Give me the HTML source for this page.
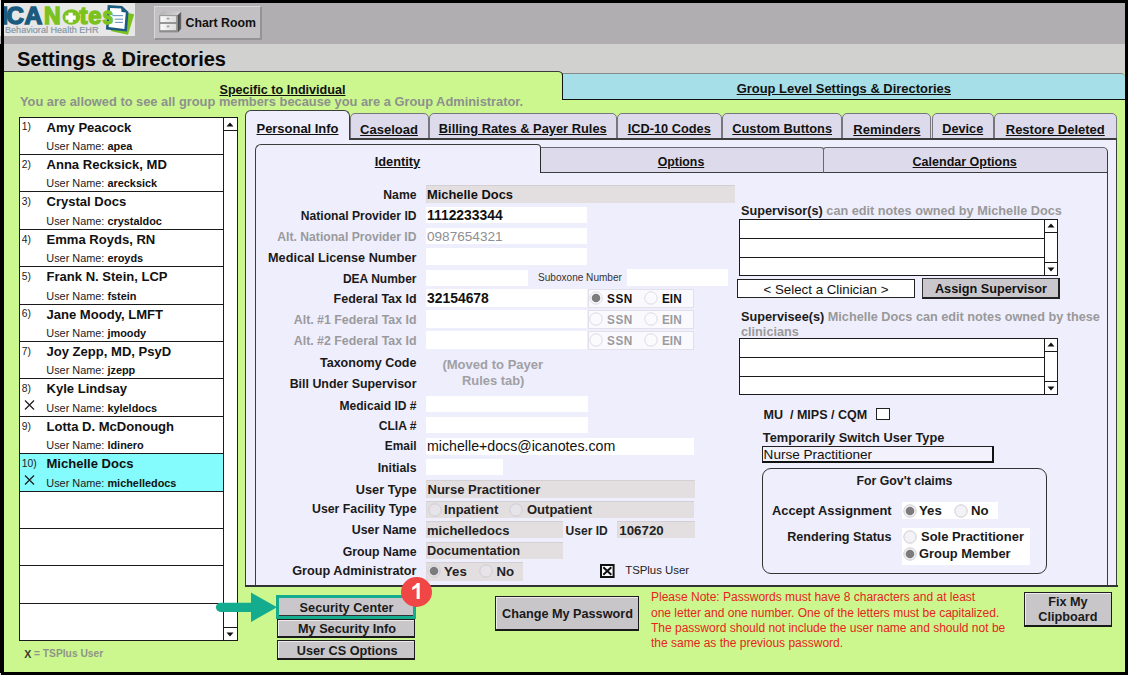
<!DOCTYPE html>
<html><head><meta charset="utf-8"><style>
html,body{margin:0;padding:0;}
body{width:1128px;height:675px;position:relative;overflow:hidden;background:#000;font-family:"Liberation Sans",sans-serif;}
body>div,body>svg{position:absolute;}
.t{white-space:nowrap;}
</style></head><body>
<div style="left:0px;top:0px;width:1px;height:36px;background:#E6E6E6"></div>
<div style="left:0px;top:36px;width:1px;height:8px;background:#B0AEB0"></div>
<div style="left:0px;top:673px;width:1px;height:2px;background:#E0E0E0"></div>
<div style="left:4px;top:3px;width:1121px;height:41px;background:#B0AEB0"></div>
<div style="left:4px;top:3px;width:131px;height:33px;background:#E7E7E7"></div>
<div style="left:4px;top:3px;width:131px;height:33px;overflow:hidden"><svg style="position:absolute;left:-4px;top:-3px" width="140" height="40" viewBox="0 0 140 40">
<polygon points="110.5,31 128,34.8 134.2,14.3 128.3,13" fill="#7CC21F"/>
<polygon points="107.7,4.9 122.1,6 128.5,11.9 126.9,31.6 105.9,29.5" fill="#1B5B7F"/>
<polygon points="110.1,7.9 121.2,8.6 121.5,11.9 125.8,12.4 124.4,28.9 108.6,27" fill="#fff"/>
<line x1="112.4" y1="15.6" x2="123" y2="15.6" stroke="#6f96c0" stroke-width="1.1"/>
<line x1="114.7" y1="19.2" x2="123" y2="19.2" stroke="#6f96c0" stroke-width="1.1"/>
<line x1="115" y1="22.4" x2="123" y2="22.4" stroke="#6f96c0" stroke-width="1.1"/>
<g font-family="Liberation Sans" font-weight="700" font-size="24.6" stroke-width="1.5">
<text x="1.2" y="24.1" fill="#1B5B7F" stroke="#1B5B7F">I</text>
<text x="6.6" y="24.1" fill="#1B5B7F" stroke="#1B5B7F" textLength="17.4" lengthAdjust="spacingAndGlyphs">C</text>
<text x="24.6" y="24.1" fill="#1B5B7F" stroke="#1B5B7F" textLength="17.8" lengthAdjust="spacingAndGlyphs">A</text>
<text x="44" y="24.1" fill="#7CC21F" stroke="#7CC21F" textLength="16.6" lengthAdjust="spacingAndGlyphs">N</text>
<text x="79.6" y="24.1" fill="#7CC21F" stroke="#7CC21F" textLength="8" lengthAdjust="spacingAndGlyphs">t</text>
<text x="88.3" y="24.1" fill="#7CC21F" stroke="#7CC21F" textLength="13.2" lengthAdjust="spacingAndGlyphs">e</text>
<text x="102.4" y="24.1" fill="#7CC21F" stroke="#7CC21F" textLength="10.6" lengthAdjust="spacingAndGlyphs">s</text>
</g>
<ellipse cx="71.4" cy="17.0" rx="8.9" ry="7.7" fill="#7CC21F"/>
<path d="M68.45 12.80 H72.75 V15.45 H75.70 V19.75 H72.75 V22.40 H68.45 V19.75 H65.50 V15.45 H68.45 Z" fill="#fff"/>
</svg></div>
<div class="t" style="left:5px;top:24.5px;font-size:9.1px;line-height:10px;color:#8494A2;letter-spacing:0px;-webkit-text-stroke:0.15px #8494A2">Behavioral Health EHR</div>
<div style="left:154px;top:6px;width:108px;height:34px;background:#C2C0C2;border-top:1px solid #D8D8D8;border-left:1px solid #D8D8D8;border-right:2px solid #959395;border-bottom:2px solid #959395;box-sizing:border-box"></div>
<svg style="left:154px;top:6px" width="36" height="34" viewBox="0 0 36 34">
<defs><linearGradient id="cg1" x1="0" y1="0" x2="1" y2="0"><stop offset="0" stop-color="#B4B4B4"/><stop offset="1" stop-color="#D6D6D6"/></linearGradient>
<linearGradient id="cg2" x1="0" y1="0" x2="1" y2="0"><stop offset="0" stop-color="#3E3E3E"/><stop offset="1" stop-color="#6E6E6E"/></linearGradient>
<linearGradient id="cg3" x1="0" y1="0" x2="1" y2="0"><stop offset="0" stop-color="#FAFAFA"/><stop offset="1" stop-color="#DCDCDC"/></linearGradient></defs>
<polygon points="5.5,9.3 23.7,9.3 27.2,5.8 8.6,5" fill="url(#cg1)"/>
<polygon points="23.7,9.3 27.2,5.8 27.2,22.7 23.7,26.4" fill="url(#cg2)"/>
<rect x="5.3" y="9.3" width="18.4" height="17.1" fill="#8C8C8C"/>
<rect x="6.3" y="10.1" width="15.9" height="6" fill="url(#cg3)"/>
<rect x="6.3" y="17.9" width="15.9" height="6.3" fill="url(#cg3)"/>
<rect x="12.8" y="11.8" width="2.6" height="1.6" fill="#9A9A9A"/>
<rect x="12.8" y="19.6" width="2.6" height="1.6" fill="#9A9A9A"/>
</svg>
<div class="t" style="left:185.5px;top:17.29px;font-size:12.3px;line-height:12.3px;font-weight:700;color:#111;">Chart Room</div>
<div style="left:4px;top:44px;width:1121px;height:29px;background:#D1D1CF"></div>
<div class="t" style="left:17px;top:48.57px;font-size:20px;line-height:20px;font-weight:700;color:#0A0A0A;">Settings &amp; Directories</div>
<div style="left:4px;top:73px;width:1121px;height:599px;background:#CCF78F"></div>
<div style="left:4px;top:71px;width:559px;height:29px;background:#CCF78F;border-top:1.5px solid #3C3C3C;border-right:1.5px solid #3C3C3C;border-top-right-radius:5px;box-sizing:border-box"></div>
<div style="left:561.5px;top:73px;width:563.5px;height:27px;background:#A7DFE8;border-top:1px solid #8a8a8a;border-left:1.5px solid #111;border-bottom:1.5px solid #111;border-top-right-radius:4px;box-sizing:border-box"></div>
<div class="t" style="left:443.79999999999995px;width:800px;text-align:center;top:83.24px;font-size:12.95px;line-height:12.95px;font-weight:700;color:#111;text-decoration:underline">Group Level Settings &amp; Directories</div>
<div class="t" style="left:-117.5px;width:800px;text-align:center;top:84.13px;font-size:12.6px;line-height:12.6px;font-weight:700;color:#111;text-decoration:underline">Specific to Individual</div>
<div class="t" style="left:20px;top:96.12px;font-size:12.85px;line-height:12.85px;font-weight:700;color:#8C918D;">You are allowed to see all group members because you are a Group Administrator.</div>
<div style="left:19px;top:117px;width:219px;height:524px;background:#fff;border:1px solid #1a1a1a;box-sizing:border-box"></div>
<div class="t" style="left:21.8px;top:122.48px;font-size:10.3px;line-height:10.3px;font-weight:400;color:#222;">1)</div>
<div class="t" style="left:46.5px;top:120.65px;font-size:13.05px;line-height:13.05px;font-weight:700;color:#111;">Amy Peacock</div>
<div class="t" style="left:46.3px;top:140.97px;font-size:10.9px;line-height:10.9px;color:#222">User Name: <b style="color:#111">apea</b></div>
<div style="left:19px;top:154px;width:205px;height:1px;background:#1a1a1a"></div>
<div class="t" style="left:21.8px;top:159.88px;font-size:10.3px;line-height:10.3px;font-weight:400;color:#222;">2)</div>
<div class="t" style="left:46.5px;top:158.05px;font-size:13.05px;line-height:13.05px;font-weight:700;color:#111;">Anna Recksick, MD</div>
<div class="t" style="left:46.3px;top:178.37px;font-size:10.9px;line-height:10.9px;color:#222">User Name: <b style="color:#111">arecksick</b></div>
<div style="left:19px;top:191px;width:205px;height:1px;background:#1a1a1a"></div>
<div class="t" style="left:21.8px;top:197.28px;font-size:10.3px;line-height:10.3px;font-weight:400;color:#222;">3)</div>
<div class="t" style="left:46.5px;top:195.45px;font-size:13.05px;line-height:13.05px;font-weight:700;color:#111;">Crystal Docs</div>
<div class="t" style="left:46.3px;top:215.77px;font-size:10.9px;line-height:10.9px;color:#222">User Name: <b style="color:#111">crystaldoc</b></div>
<div style="left:19px;top:229px;width:205px;height:1px;background:#1a1a1a"></div>
<div class="t" style="left:21.8px;top:234.68px;font-size:10.3px;line-height:10.3px;font-weight:400;color:#222;">4)</div>
<div class="t" style="left:46.5px;top:232.85px;font-size:13.05px;line-height:13.05px;font-weight:700;color:#111;">Emma Royds, RN</div>
<div class="t" style="left:46.3px;top:253.17px;font-size:10.9px;line-height:10.9px;color:#222">User Name: <b style="color:#111">eroyds</b></div>
<div style="left:19px;top:266px;width:205px;height:1px;background:#1a1a1a"></div>
<div class="t" style="left:21.8px;top:272.08px;font-size:10.3px;line-height:10.3px;font-weight:400;color:#222;">5)</div>
<div class="t" style="left:46.5px;top:270.25px;font-size:13.05px;line-height:13.05px;font-weight:700;color:#111;">Frank N. Stein, LCP</div>
<div class="t" style="left:46.3px;top:290.57px;font-size:10.9px;line-height:10.9px;color:#222">User Name: <b style="color:#111">fstein</b></div>
<div style="left:19px;top:304px;width:205px;height:1px;background:#1a1a1a"></div>
<div class="t" style="left:21.8px;top:309.48px;font-size:10.3px;line-height:10.3px;font-weight:400;color:#222;">6)</div>
<div class="t" style="left:46.5px;top:307.65px;font-size:13.05px;line-height:13.05px;font-weight:700;color:#111;">Jane Moody, LMFT</div>
<div class="t" style="left:46.3px;top:327.97px;font-size:10.9px;line-height:10.9px;color:#222">User Name: <b style="color:#111">jmoody</b></div>
<div style="left:19px;top:341px;width:205px;height:1px;background:#1a1a1a"></div>
<div class="t" style="left:21.8px;top:346.88px;font-size:10.3px;line-height:10.3px;font-weight:400;color:#222;">7)</div>
<div class="t" style="left:46.5px;top:345.05px;font-size:13.05px;line-height:13.05px;font-weight:700;color:#111;">Joy Zepp, MD, PsyD</div>
<div class="t" style="left:46.3px;top:365.37px;font-size:10.9px;line-height:10.9px;color:#222">User Name: <b style="color:#111">jzepp</b></div>
<div style="left:19px;top:378px;width:205px;height:1px;background:#1a1a1a"></div>
<div class="t" style="left:21.8px;top:384.28px;font-size:10.3px;line-height:10.3px;font-weight:400;color:#222;">8)</div>
<div class="t" style="left:46.5px;top:382.45px;font-size:13.05px;line-height:13.05px;font-weight:700;color:#111;">Kyle Lindsay</div>
<div class="t" style="left:46.3px;top:402.77px;font-size:10.9px;line-height:10.9px;color:#222">User Name: <b style="color:#111">kyleldocs</b></div>
<svg style="left:24px;top:399.90px" width="11" height="10" viewBox="0 0 11 10"><path d="M1 0.5 L10 9.5 M10 0.5 L1 9.5" stroke="#222" stroke-width="1.3"/></svg>
<div style="left:19px;top:416px;width:205px;height:1px;background:#1a1a1a"></div>
<div class="t" style="left:21.8px;top:421.68px;font-size:10.3px;line-height:10.3px;font-weight:400;color:#222;">9)</div>
<div class="t" style="left:46.5px;top:419.85px;font-size:13.05px;line-height:13.05px;font-weight:700;color:#111;">Lotta D. McDonough</div>
<div class="t" style="left:46.3px;top:440.17px;font-size:10.9px;line-height:10.9px;color:#222">User Name: <b style="color:#111">ldinero</b></div>
<div style="left:20px;top:454px;width:203px;height:37px;background:#84FBFC"></div>
<div style="left:19px;top:453px;width:205px;height:1px;background:#1a1a1a"></div>
<div class="t" style="left:21.8px;top:459.08px;font-size:10.3px;line-height:10.3px;font-weight:400;color:#222;">10)</div>
<div class="t" style="left:46.5px;top:457.25px;font-size:13.05px;line-height:13.05px;font-weight:700;color:#111;">Michelle Docs</div>
<div class="t" style="left:46.3px;top:477.57px;font-size:10.9px;line-height:10.9px;color:#222">User Name: <b style="color:#111">michelledocs</b></div>
<svg style="left:24px;top:474.70px" width="11" height="10" viewBox="0 0 11 10"><path d="M1 0.5 L10 9.5 M10 0.5 L1 9.5" stroke="#222" stroke-width="1.3"/></svg>
<div style="left:19px;top:491px;width:205px;height:1px;background:#1a1a1a"></div>
<div style="left:19px;top:528px;width:205px;height:1px;background:#1a1a1a"></div>
<div style="left:19px;top:565px;width:205px;height:1px;background:#1a1a1a"></div>
<div style="left:19px;top:603px;width:205px;height:1px;background:#1a1a1a"></div>
<div style="left:223px;top:117px;width:15px;height:524px;background:#fff;border:1px solid #1a1a1a;box-sizing:border-box"></div>
<div style="left:223px;top:130px;width:15px;height:1px;background:#1a1a1a"></div>
<div style="left:223px;top:627px;width:15px;height:1px;background:#1a1a1a"></div>
<svg style="left:226px;top:121.5px" width="8" height="5" viewBox="0 0 8 5"><polygon points="0.5,4.5 7.5,4.5 4,0.5" fill="#111"/></svg>
<svg style="left:226px;top:631.5px" width="8" height="5" viewBox="0 0 8 5"><polygon points="0.5,0.5 7.5,0.5 4,4.5" fill="#111"/></svg>
<div class="t" style="left:24.3px;top:648.73px;font-size:10.6px;line-height:10.6px;font-weight:700;color:#34402C;">X</div>
<div class="t" style="left:34px;top:649.02px;font-size:10.25px;line-height:10.25px;font-weight:700;color:#8E9588;">= TSPlus User</div>
<div style="left:245px;top:138px;width:872px;height:449px;background:#EFEEFC;border:1.5px solid #3C3C3C;border-top:none;box-sizing:border-box"></div>
<div style="left:245px;top:110px;width:104.5px;height:30px;background:#EFEEFC;border:1.5px solid #3C3C3C;border-bottom:none;border-radius:6px 6px 0 0;box-sizing:border-box"></div>
<div class="t" style="left:-102.5px;width:800px;text-align:center;top:122.64px;font-size:12.95px;line-height:12.95px;font-weight:700;color:#111;text-decoration:underline">Personal Info</div>
<div style="left:349.5px;top:112.8px;width:79.0px;height:26.5px;background:#DDDBEB;border:1px solid #77757D;border-radius:5px 5px 0 0;box-sizing:border-box"></div>
<div class="t" style="left:-11.0px;width:800px;text-align:center;top:122.60px;font-size:13px;line-height:13px;font-weight:700;color:#111;text-decoration:underline">Caseload</div>
<div style="left:428.5px;top:112.8px;width:188.5px;height:26.5px;background:#DDDBEB;border:1px solid #77757D;border-radius:5px 5px 0 0;box-sizing:border-box"></div>
<div class="t" style="left:122.75px;width:800px;text-align:center;top:122.71px;font-size:12.86px;line-height:12.86px;font-weight:700;color:#111;text-decoration:underline">Billing Rates &amp; Payer Rules</div>
<div style="left:617px;top:112.8px;width:104.5px;height:26.5px;background:#DDDBEB;border:1px solid #77757D;border-radius:5px 5px 0 0;box-sizing:border-box"></div>
<div class="t" style="left:269.25px;width:800px;text-align:center;top:122.79px;font-size:12.77px;line-height:12.77px;font-weight:700;color:#111;text-decoration:underline">ICD-10 Codes</div>
<div style="left:722px;top:112.8px;width:120.29999999999995px;height:26.5px;background:#DDDBEB;border:1px solid #77757D;border-radius:5px 5px 0 0;box-sizing:border-box"></div>
<div class="t" style="left:382.15px;width:800px;text-align:center;top:122.74px;font-size:12.83px;line-height:12.83px;font-weight:700;color:#111;text-decoration:underline">Custom Buttons</div>
<div style="left:842.3px;top:112.8px;width:89.20000000000005px;height:26.5px;background:#DDDBEB;border:1px solid #77757D;border-radius:5px 5px 0 0;box-sizing:border-box"></div>
<div class="t" style="left:486.9px;width:800px;text-align:center;top:122.60px;font-size:13px;line-height:13px;font-weight:700;color:#111;text-decoration:underline">Reminders</div>
<div style="left:931.5px;top:112.8px;width:62.5px;height:26.5px;background:#DDDBEB;border:1px solid #77757D;border-radius:5px 5px 0 0;box-sizing:border-box"></div>
<div class="t" style="left:562.75px;width:800px;text-align:center;top:122.85px;font-size:12.7px;line-height:12.7px;font-weight:700;color:#111;text-decoration:underline">Device</div>
<div style="left:994px;top:112.8px;width:122.5px;height:26.5px;background:#DDDBEB;border:1px solid #77757D;border-radius:5px 5px 0 0;box-sizing:border-box"></div>
<div class="t" style="left:655.25px;width:800px;text-align:center;top:122.60px;font-size:13px;line-height:13px;font-weight:700;color:#111;text-decoration:underline">Restore Deleted</div>
<div style="left:349px;top:138px;width:768px;height:1.5px;background:#3C3C3C"></div>
<div style="left:255px;top:160px;width:853px;height:426px;background:#EFEEFC;border-left:1.5px solid #3C3C3C;border-right:1.5px solid #3C3C3C;box-sizing:border-box"></div>
<div style="left:255px;top:144px;width:286px;height:28.5px;background:#EFEEFC;border-top:1.5px solid #3C3C3C;border-left:1.5px solid #3C3C3C;border-right:1.5px solid #2a2a2a;border-radius:6px 4px 0 0;box-sizing:border-box"></div>
<div style="left:540.5px;top:146.6px;width:283.5px;height:26px;background:#DDDBEB;border-top:1px solid #6A6870;border-right:1px solid #6A6870;border-bottom:1.5px solid #3C3C3C;border-radius:0 3px 0 0;box-sizing:border-box"></div>
<div style="left:823px;top:146.6px;width:285px;height:26px;background:#DDDBEB;border-top:1px solid #6A6870;border-left:1px solid #6A6870;border-right:1.5px solid #3C3C3C;border-bottom:1.5px solid #3C3C3C;border-radius:3px 5px 0 0;box-sizing:border-box"></div>
<div style="left:245px;top:585.4px;width:872.5px;height:1.3px;background:#333"></div>
<div class="t" style="left:-2.5px;width:800px;text-align:center;top:155.96px;font-size:12.8px;line-height:12.8px;font-weight:700;color:#111;text-decoration:underline">Identity</div>
<div class="t" style="left:281px;width:800px;text-align:center;top:156.39px;font-size:12.3px;line-height:12.3px;font-weight:700;color:#111;text-decoration:underline">Options</div>
<div class="t" style="left:564.7px;width:800px;text-align:center;top:156.22px;font-size:12.5px;line-height:12.5px;font-weight:700;color:#111;text-decoration:underline">Calendar Options</div>
<div style="left:425.6px;top:185.3px;width:309.0px;height:17.5px;background:#E3DFE1;border-top:1px solid #D3CFD3;border-left:1px solid #DCD8DC;box-sizing:border-box"></div>
<div style="left:425.6px;top:206.7px;width:161.79999999999995px;height:16.5px;background:#fff;"></div>
<div style="left:425.6px;top:227.6px;width:161.79999999999995px;height:16.400000000000006px;background:#fff;"></div>
<div style="left:425.6px;top:248.4px;width:161.79999999999995px;height:16.599999999999994px;background:#fff;"></div>
<div style="left:425.6px;top:269.8px;width:102.60000000000002px;height:16.5px;background:#fff;"></div>
<div style="left:626.9px;top:268.8px;width:101.39999999999998px;height:17.19999999999999px;background:#fff;"></div>
<div style="left:425.6px;top:289.3px;width:161.79999999999995px;height:17.69999999999999px;background:#fff;"></div>
<div style="left:425.6px;top:310.3px;width:161.79999999999995px;height:17.69999999999999px;background:#fff;"></div>
<div style="left:425.6px;top:331.3px;width:161.79999999999995px;height:17.69999999999999px;background:#fff;"></div>
<div style="left:587.5px;top:289.0px;width:106.70000000000005px;height:19.19999999999999px;background:#FAFAFE;border:1px solid #E2E0EA;box-sizing:border-box"></div>
<div style="left:587.5px;top:309.8px;width:106.70000000000005px;height:19.19999999999999px;background:#FAFAFE;border:1px solid #E2E0EA;box-sizing:border-box"></div>
<div style="left:587.5px;top:330.6px;width:106.70000000000005px;height:19.19999999999999px;background:#FAFAFE;border:1px solid #E2E0EA;box-sizing:border-box"></div>
<div style="left:425.6px;top:395.9px;width:162.0px;height:16.100000000000023px;background:#fff;"></div>
<div style="left:425.6px;top:416.5px;width:162.0px;height:16.5px;background:#fff;"></div>
<div style="left:425.6px;top:438.0px;width:268.4px;height:16.600000000000023px;background:#fff;"></div>
<div style="left:425.6px;top:458.6px;width:77.39999999999998px;height:16.69999999999999px;background:#fff;"></div>
<div style="left:425.5px;top:480.0px;width:269.5px;height:17.5px;background:#E3DFE1;border-top:1px solid #D3CFD3;border-left:1px solid #DCD8DC;box-sizing:border-box"></div>
<div style="left:425.5px;top:500.6px;width:268.1px;height:17.600000000000023px;background:#E3DFE1;border-top:1px solid #D3CFD3;border-left:1px solid #DCD8DC;box-sizing:border-box"></div>
<div style="left:425.5px;top:520.5px;width:137.10000000000002px;height:17.5px;background:#E3DFE1;border-top:1px solid #D3CFD3;border-left:1px solid #DCD8DC;box-sizing:border-box"></div>
<div style="left:617.0px;top:520.5px;width:78.0px;height:17.5px;background:#E3DFE1;border-top:1px solid #D3CFD3;border-left:1px solid #DCD8DC;box-sizing:border-box"></div>
<div style="left:425.5px;top:541.5px;width:137.10000000000002px;height:17.899999999999977px;background:#E3DFE1;border-top:1px solid #D3CFD3;border-left:1px solid #DCD8DC;box-sizing:border-box"></div>
<div style="left:425.5px;top:562.2px;width:97.89999999999998px;height:18.399999999999977px;background:#E3DFE1;border-top:1px solid #D3CFD3;border-left:1px solid #DCD8DC;box-sizing:border-box"></div>
<div class="t" style="left:-183.5px;width:600px;text-align:right;top:188.88px;font-size:12.19px;line-height:12.19px;font-weight:700;color:#1a1a1a;">Name</div>
<div class="t" style="left:-183.5px;width:600px;text-align:right;top:210.05px;font-size:12.11px;line-height:12.11px;font-weight:700;color:#1a1a1a;">National Provider ID</div>
<div class="t" style="left:-183.5px;width:600px;text-align:right;top:231.11px;font-size:12.16px;line-height:12.16px;font-weight:700;color:#9A9A9E;">Alt. National Provider ID</div>
<div class="t" style="left:-183.5px;width:600px;text-align:right;top:251.68px;font-size:12.66px;line-height:12.66px;font-weight:700;color:#1a1a1a;">Medical License Number</div>
<div class="t" style="left:-183.5px;width:600px;text-align:right;top:273.24px;font-size:12.0px;line-height:12.0px;font-weight:700;color:#1a1a1a;">DEA Number</div>
<div class="t" style="left:-183.5px;width:600px;text-align:right;top:293.44px;font-size:12.48px;line-height:12.48px;font-weight:700;color:#1a1a1a;">Federal Tax Id</div>
<div class="t" style="left:-183.5px;width:600px;text-align:right;top:314.33px;font-size:12.37px;line-height:12.37px;font-weight:700;color:#9A9A9E;">Alt. #1 Federal Tax Id</div>
<div class="t" style="left:-183.5px;width:600px;text-align:right;top:334.53px;font-size:12.37px;line-height:12.37px;font-weight:700;color:#9A9A9E;">Alt. #2 Federal Tax Id</div>
<div class="t" style="left:-183.5px;width:600px;text-align:right;top:356.68px;font-size:12.54px;line-height:12.54px;font-weight:700;color:#1a1a1a;">Taxonomy Code</div>
<div class="t" style="left:-183.5px;width:600px;text-align:right;top:377.89px;font-size:12.42px;line-height:12.42px;font-weight:700;color:#1a1a1a;">Bill Under Supervisor</div>
<div class="t" style="left:-183.5px;width:600px;text-align:right;top:399.50px;font-size:12.05px;line-height:12.05px;font-weight:700;color:#1a1a1a;">Medicaid ID #</div>
<div class="t" style="left:-183.5px;width:600px;text-align:right;top:420.17px;font-size:12.08px;line-height:12.08px;font-weight:700;color:#1a1a1a;">CLIA #</div>
<div class="t" style="left:-183.5px;width:600px;text-align:right;top:441.03px;font-size:11.9px;line-height:11.9px;font-weight:700;color:#1a1a1a;">Email</div>
<div class="t" style="left:-183.5px;width:600px;text-align:right;top:461.53px;font-size:12.25px;line-height:12.25px;font-weight:700;color:#1a1a1a;">Initials</div>
<div class="t" style="left:-183.5px;width:600px;text-align:right;top:483.61px;font-size:12.75px;line-height:12.75px;font-weight:700;color:#1a1a1a;">User Type</div>
<div class="t" style="left:-183.5px;width:600px;text-align:right;top:502.97px;font-size:12.32px;line-height:12.32px;font-weight:700;color:#1a1a1a;">User Facility Type</div>
<div class="t" style="left:-183.5px;width:600px;text-align:right;top:524.39px;font-size:12.42px;line-height:12.42px;font-weight:700;color:#1a1a1a;">User Name</div>
<div class="t" style="left:-183.5px;width:600px;text-align:right;top:545.98px;font-size:12.31px;line-height:12.31px;font-weight:700;color:#1a1a1a;">Group Name</div>
<div class="t" style="left:-183.5px;width:600px;text-align:right;top:565.45px;font-size:12.7px;line-height:12.7px;font-weight:700;color:#1a1a1a;">Group Administrator</div>
<div class="t" style="left:427px;top:188.88px;font-size:12.9px;line-height:12.9px;font-weight:700;color:#111;">Michelle Docs</div>
<div class="t" style="left:427px;top:208.53px;font-size:13.9px;line-height:13.9px;font-weight:700;color:#111;">1112233344</div>
<div class="t" style="left:427px;top:229.89px;font-size:13.6px;line-height:13.6px;font-weight:400;color:#8E8E92;">0987654321</div>
<div class="t" style="left:538px;top:272.98px;font-size:10.07px;line-height:10.07px;font-weight:400;color:#333;">Suboxone Number</div>
<div class="t" style="left:427px;top:292.23px;font-size:13.9px;line-height:13.9px;font-weight:700;color:#111;">32154678</div>
<div class="t" style="left:92.80000000000001px;width:800px;text-align:center;top:357.95px;font-size:13.05px;line-height:13.05px;font-weight:700;color:#A0A0A4;">(Moved to Payer</div>
<div class="t" style="left:93.19999999999999px;width:800px;text-align:center;top:375.45px;font-size:12.93px;line-height:12.93px;font-weight:700;color:#A0A0A4;">Rules tab)</div>
<div class="t" style="left:427px;top:438.78px;font-size:14.2px;line-height:14.2px;font-weight:400;color:#111;">michelle+docs@icanotes.com</div>
<div class="t" style="left:427.5px;top:483.17px;font-size:13.03px;line-height:13.03px;font-weight:700;color:#222;">Nurse Practitioner</div>
<div class="t" style="left:444.1px;top:502.97px;font-size:13.03px;line-height:13.03px;font-weight:700;color:#222;">Inpatient</div>
<div class="t" style="left:527px;top:502.97px;font-size:13.03px;line-height:13.03px;font-weight:700;color:#222;">Outpatient</div>
<div class="t" style="left:427px;top:523.99px;font-size:13.01px;line-height:13.01px;font-weight:700;color:#222;">michelledocs</div>
<div class="t" style="left:565.6px;top:524.60px;font-size:12.05px;line-height:12.05px;font-weight:700;color:#222;">User ID</div>
<div class="t" style="left:619.3px;top:523.74px;font-size:13.3px;line-height:13.3px;font-weight:700;color:#222;">106720</div>
<div class="t" style="left:427px;top:544.56px;font-size:12.8px;line-height:12.8px;font-weight:700;color:#222;">Documentation</div>
<div class="t" style="left:444px;top:565.13px;font-size:13.2px;line-height:13.2px;font-weight:700;color:#222;">Yes</div>
<div class="t" style="left:496.6px;top:565.13px;font-size:13.2px;line-height:13.2px;font-weight:700;color:#222;">No</div>
<div class="t" style="left:625.2px;top:565.25px;font-size:11.4px;line-height:11.4px;font-weight:400;color:#222;">TSPlus User</div>
<svg style="left:588.2px;top:290.2px" width="16" height="16" viewBox="0 0 16 16"><circle cx="8" cy="8" r="6.2" fill="#FBFBFD" stroke="#DDDBE3" stroke-width="1"/><circle cx="8" cy="8" r="4.3" fill="#7c7c7c"/></svg>
<svg style="left:643.3px;top:290.2px" width="16" height="16" viewBox="0 0 16 16"><circle cx="8" cy="8" r="6.2" fill="#FBFBFD" stroke="#DDDBE3" stroke-width="1"/></svg>
<div class="t" style="left:607.2px;top:292.16px;font-size:13.4px;line-height:13.4px;font-weight:700;color:#111;transform:scaleX(0.88);transform-origin:0 0;letter-spacing:0.6px">SSN</div>
<div class="t" style="left:661.7px;top:292.16px;font-size:13.4px;line-height:13.4px;font-weight:700;color:#111;transform:scaleX(0.88);transform-origin:0 0">EIN</div>
<svg style="left:588.2px;top:311.0px" width="16" height="16" viewBox="0 0 16 16"><circle cx="8" cy="8" r="6.2" fill="#FBFBFD" stroke="#DDDBE3" stroke-width="1"/></svg>
<svg style="left:643.3px;top:311.0px" width="16" height="16" viewBox="0 0 16 16"><circle cx="8" cy="8" r="6.2" fill="#FBFBFD" stroke="#DDDBE3" stroke-width="1"/></svg>
<div class="t" style="left:607.2px;top:312.96px;font-size:13.4px;line-height:13.4px;font-weight:700;color:#9A9A9E;transform:scaleX(0.88);transform-origin:0 0;letter-spacing:0.6px">SSN</div>
<div class="t" style="left:661.7px;top:312.96px;font-size:13.4px;line-height:13.4px;font-weight:700;color:#9A9A9E;transform:scaleX(0.88);transform-origin:0 0">EIN</div>
<svg style="left:588.2px;top:331.8px" width="16" height="16" viewBox="0 0 16 16"><circle cx="8" cy="8" r="6.2" fill="#FBFBFD" stroke="#DDDBE3" stroke-width="1"/></svg>
<svg style="left:643.3px;top:331.8px" width="16" height="16" viewBox="0 0 16 16"><circle cx="8" cy="8" r="6.2" fill="#FBFBFD" stroke="#DDDBE3" stroke-width="1"/></svg>
<div class="t" style="left:607.2px;top:333.76px;font-size:13.4px;line-height:13.4px;font-weight:700;color:#9A9A9E;transform:scaleX(0.88);transform-origin:0 0;letter-spacing:0.6px">SSN</div>
<div class="t" style="left:661.7px;top:333.76px;font-size:13.4px;line-height:13.4px;font-weight:700;color:#9A9A9E;transform:scaleX(0.88);transform-origin:0 0">EIN</div>
<svg style="left:426.6px;top:501.5px" width="16" height="16" viewBox="0 0 16 16"><circle cx="8" cy="8" r="6.2" fill="#E6E4E8" stroke="#CFCDD3" stroke-width="1"/></svg>
<svg style="left:508.20000000000005px;top:501.5px" width="16" height="16" viewBox="0 0 16 16"><circle cx="8" cy="8" r="6.2" fill="#E6E4E8" stroke="#CFCDD3" stroke-width="1"/></svg>
<svg style="left:426.4px;top:563.3px" width="16" height="16" viewBox="0 0 16 16"><circle cx="8" cy="8" r="6.2" fill="#E6E4E8" stroke="#CFCDD3" stroke-width="1"/><circle cx="8" cy="8" r="4.3" fill="#7c7c7c"/></svg>
<svg style="left:477.9px;top:563.3px" width="16" height="16" viewBox="0 0 16 16"><circle cx="8" cy="8" r="6.2" fill="#E6E4E8" stroke="#CFCDD3" stroke-width="1"/></svg>
<svg style="left:600px;top:564px" width="15" height="14" viewBox="0 0 15 14"><rect x="1" y="1" width="12.6" height="12" fill="#fff" stroke="#111" stroke-width="2"/><path d="M3.3 3.2 L11.3 10.8 M11.3 3.2 L3.3 10.8" stroke="#111" stroke-width="2"/></svg>
<div class="t" style="left:741px;top:205.25px;font-size:12.7px;line-height:12.7px;font-weight:700;color:#999"><span style="color:#1a1a1a">Supervisor(s)</span> can edit notes owned by Michelle Docs</div>
<div style="left:739px;top:219px;width:319px;height:57px;background:#fff;border:1px solid #1a1a1a;box-sizing:border-box"></div>
<div style="left:739px;top:238px;width:305px;height:1px;background:#1a1a1a"></div>
<div style="left:739px;top:257px;width:305px;height:1px;background:#1a1a1a"></div>
<div style="left:1044px;top:219px;width:1px;height:57px;background:#1a1a1a"></div>
<div style="left:1044px;top:232px;width:14px;height:1px;background:#1a1a1a"></div>
<div style="left:1044px;top:262px;width:14px;height:1px;background:#1a1a1a"></div>
<svg style="left:1047px;top:223px" width="8" height="5" viewBox="0 0 8 5"><polygon points="0.5,4.5 7.5,4.5 4,0.5" fill="#111"/></svg>
<svg style="left:1047px;top:267px" width="8" height="5" viewBox="0 0 8 5"><polygon points="0.5,0.5 7.5,0.5 4,4.5" fill="#111"/></svg>
<div style="left:737px;top:279.2px;width:178px;height:18.7px;background:#fff;border:1.3px solid #222;box-sizing:border-box"></div>
<div class="t" style="left:426px;width:800px;text-align:center;top:282.54px;font-size:13.3px;line-height:13.3px;font-weight:400;color:#111;">&lt; Select a Clinician &gt;</div>
<div style="left:922px;top:278.2px;width:138.2px;height:20.8px;background:#C9C7CB;border:1.3px solid #333;border-right:2px solid #222;border-bottom:2px solid #222;box-sizing:border-box"></div>
<div class="t" style="left:591px;width:800px;text-align:center;top:282.75px;font-size:12.7px;line-height:12.7px;font-weight:700;color:#111;">Assign Supervisor</div>
<div class="t" style="white-space:normal;left:741px;top:309.95px;width:366px;font-size:12.7px;line-height:14.9px;font-weight:700;color:#999"><span style="color:#1a1a1a">Supervisee(s)</span> Michelle Docs can edit notes owned by these clinicians</div>
<div style="left:739px;top:338px;width:319px;height:57px;background:#fff;border:1px solid #1a1a1a;box-sizing:border-box"></div>
<div style="left:739px;top:357px;width:305px;height:1px;background:#1a1a1a"></div>
<div style="left:739px;top:376px;width:305px;height:1px;background:#1a1a1a"></div>
<div style="left:1044px;top:338px;width:1px;height:57px;background:#1a1a1a"></div>
<div style="left:1044px;top:351px;width:14px;height:1px;background:#1a1a1a"></div>
<div style="left:1044px;top:381px;width:14px;height:1px;background:#1a1a1a"></div>
<svg style="left:1047px;top:342px" width="8" height="5" viewBox="0 0 8 5"><polygon points="0.5,4.5 7.5,4.5 4,0.5" fill="#111"/></svg>
<svg style="left:1047px;top:386px" width="8" height="5" viewBox="0 0 8 5"><polygon points="0.5,0.5 7.5,0.5 4,4.5" fill="#111"/></svg>
<div class="t" style="left:763.5px;top:408.68px;font-size:12.54px;line-height:12.54px;font-weight:700;color:#1a1a1a;white-space:pre">MU  / MIPS / CQM</div>
<div style="left:876.3px;top:407.9px;width:13.4px;height:12.4px;background:#fff;border:1.3px solid #222;box-sizing:border-box"></div>
<div class="t" style="left:762.8px;top:431.96px;font-size:12.8px;line-height:12.8px;font-weight:700;color:#1a1a1a;">Temporarily Switch User Type</div>
<div style="left:762px;top:446.3px;width:231.5px;height:16.9px;background:#F2F1FC;border:1.3px solid #222;border-right:2.6px solid #111;border-bottom:2.8px solid #111;box-sizing:border-box"></div>
<div class="t" style="left:763.6px;top:448.13px;font-size:13.55px;line-height:13.55px;font-weight:400;color:#111;">Nurse Practitioner</div>
<div style="left:761.9px;top:467.8px;width:284.7px;height:105.8px;border:1.3px solid #333;border-radius:9px;box-sizing:border-box"></div>
<div class="t" style="left:504.5px;width:800px;text-align:center;top:475.19px;font-size:12.3px;line-height:12.3px;font-weight:700;color:#1a1a1a;">For Gov't claims</div>
<div class="t" style="left:291.6px;width:600px;text-align:right;top:504.71px;font-size:12.86px;line-height:12.86px;font-weight:700;color:#1a1a1a;">Accept Assignment</div>
<div class="t" style="left:291.6px;width:600px;text-align:right;top:531.23px;font-size:12.61px;line-height:12.61px;font-weight:700;color:#1a1a1a;">Rendering Status</div>
<div style="left:901.7px;top:502.2px;width:96.09999999999991px;height:16.80000000000001px;background:#fff;"></div>
<div style="left:901.7px;top:528.4px;width:128.70000000000005px;height:37.10000000000002px;background:#fff;"></div>
<svg style="left:901.5px;top:502.5px" width="16" height="16" viewBox="0 0 16 16"><circle cx="8" cy="8" r="6.2" fill="#F3F2F6" stroke="#CFCDD3" stroke-width="1"/><circle cx="8" cy="8" r="4.3" fill="#7c7c7c"/></svg>
<svg style="left:952.5px;top:502.5px" width="16" height="16" viewBox="0 0 16 16"><circle cx="8" cy="8" r="6.2" fill="#F3F2F6" stroke="#CFCDD3" stroke-width="1"/></svg>
<div class="t" style="left:919px;top:504.33px;font-size:13.2px;line-height:13.2px;font-weight:700;color:#1a1a1a;">Yes</div>
<div class="t" style="left:971px;top:504.33px;font-size:13.2px;line-height:13.2px;font-weight:700;color:#1a1a1a;">No</div>
<svg style="left:901.5px;top:529px" width="16" height="16" viewBox="0 0 16 16"><circle cx="8" cy="8" r="6.2" fill="#F3F2F6" stroke="#CFCDD3" stroke-width="1"/></svg>
<svg style="left:901.5px;top:546px" width="16" height="16" viewBox="0 0 16 16"><circle cx="8" cy="8" r="6.2" fill="#F3F2F6" stroke="#CFCDD3" stroke-width="1"/><circle cx="8" cy="8" r="4.3" fill="#7c7c7c"/></svg>
<div class="t" style="left:921px;top:531.03px;font-size:12.96px;line-height:12.96px;font-weight:700;color:#1a1a1a;">Sole Practitioner</div>
<div class="t" style="left:919px;top:548.10px;font-size:12.88px;line-height:12.88px;font-weight:700;color:#1a1a1a;">Group Member</div>
<div style="left:276px;top:595.3px;width:140px;height:23.5px;background:#13AC8F"></div>
<div style="left:279px;top:598px;width:134px;height:17.5px;background:#C9C7CB;border-bottom:1.5px solid #333;box-sizing:border-box"></div>
<div class="t" style="left:-53.5px;width:800px;text-align:center;top:601.75px;font-size:12.7px;line-height:12.7px;font-weight:700;color:#1a1a1a;">Security Center</div>
<div style="left:277.2px;top:619.3px;width:138.3px;height:19.1px;background:#C8C6C9;border:1.4px solid #1e1e1e;border-right:1.8px solid #1a1a1a;border-bottom:2px solid #1a1a1a;box-sizing:border-box;box-shadow:inset 1px 1px 0 #EDEBEE"></div>
<div class="t" style="left:-53px;width:800px;text-align:center;top:623.25px;font-size:12.7px;line-height:12.7px;font-weight:700;color:#1a1a1a;">My Security Info</div>
<div style="left:277.2px;top:640.2px;width:138.3px;height:20.3px;background:#C8C6C9;border:1.4px solid #1e1e1e;border-right:1.8px solid #1a1a1a;border-bottom:2px solid #1a1a1a;box-sizing:border-box;box-shadow:inset 1px 1px 0 #EDEBEE"></div>
<div class="t" style="left:-52.80000000000001px;width:800px;text-align:center;top:645.05px;font-size:12.7px;line-height:12.7px;font-weight:700;color:#1a1a1a;">User CS Options</div>
<svg style="left:210px;top:588px" width="75" height="40" viewBox="210 588 75 40"><line x1="220.5" y1="607.3" x2="255" y2="607.3" stroke="#13AC8F" stroke-width="9.2" stroke-linecap="round"/><polygon points="251,592.6 277,607.3 251,622" fill="#13AC8F"/></svg>
<div style="left:401px;top:576.5px;width:31px;height:30px;border-radius:50%;background:#F04646"></div>
<svg style="left:405px;top:580px" width="20" height="22" viewBox="405 580 20 22"><path d="M417 583 L419.7 583 L419.7 599 L416.6 599 L416.6 587.6 Q414.6 589.2 412.2 590 L412.2 587.2 Q415.3 585.9 417 583 Z" fill="#fff"/></svg>
<div style="left:495px;top:596.3px;width:143.9px;height:34.7px;background:#C8C6C9;border:1.4px solid #1e1e1e;border-right:1.8px solid #1a1a1a;border-bottom:2px solid #1a1a1a;box-sizing:border-box;box-shadow:inset 1px 1px 0 #EDEBEE"></div>
<div class="t" style="left:167.5px;width:800px;text-align:center;top:608.27px;font-size:12.67px;line-height:12.67px;font-weight:700;color:#1a1a1a;">Change My Password</div>
<div class="t" style="left:651px;top:591.34px;font-size:12.0px;line-height:12.0px;font-weight:400;color:#E8231C;">Please Note: Passwords must have 8 characters and at least</div>
<div class="t" style="left:651px;top:606.64px;font-size:12.0px;line-height:12.0px;font-weight:400;color:#E8231C;">one letter and one number. One of the letters must be capitalized.</div>
<div class="t" style="left:651px;top:621.94px;font-size:12.0px;line-height:12.0px;font-weight:400;color:#E8231C;">The password should not include the user name and should not be</div>
<div class="t" style="left:651px;top:637.24px;font-size:12.0px;line-height:12.0px;font-weight:400;color:#E8231C;">the same as the previous password.</div>
<div style="left:1024.2px;top:591.5px;width:87.4px;height:35.5px;background:#C8C6C9;border:1.4px solid #1e1e1e;border-right:1.8px solid #1a1a1a;border-bottom:2px solid #1a1a1a;box-sizing:border-box;box-shadow:inset 1px 1px 0 #EDEBEE"></div>
<div class="t" style="left:667.9000000000001px;width:800px;text-align:center;top:595.75px;font-size:12.7px;line-height:12.7px;font-weight:700;color:#1a1a1a;">Fix My</div>
<div class="t" style="left:667.9000000000001px;width:800px;text-align:center;top:611.25px;font-size:12.7px;line-height:12.7px;font-weight:700;color:#1a1a1a;">Clipboard</div>
</body></html>
